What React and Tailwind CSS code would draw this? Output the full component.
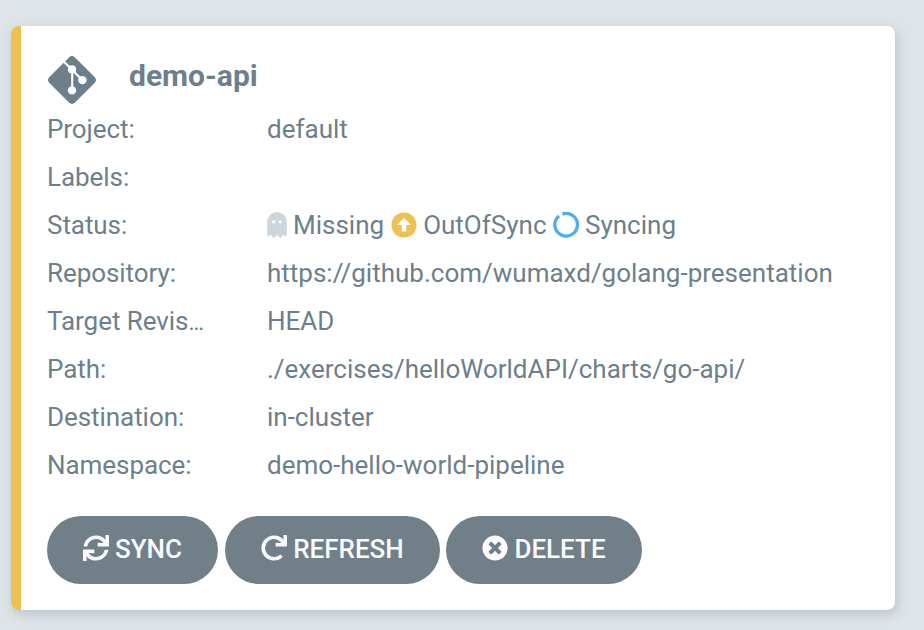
import {
  FaGhost,
  FaArrowAltCircleUp,
  FaSync,
  FaRedo,
  FaTimesCircle,
} from 'react-icons/fa';

function GitIcon() {
  return (
    <svg viewBox="0 0 48 48" className="size-[48px] shrink-0" fill="none">
      <path
        d="M27 1.4 L46.6 21 Q49.4 24 46.6 27 L27 46.6 Q24 49.4 21 46.6 L1.4 27 Q-1.4 24 1.4 21 L21 1.4 Q24 -1.4 27 1.4Z"
        fill="#6d7f8b"
      />
      <path d="M15.5 5.2 L34.3 24 M24.2 13.5 V34.3" stroke="#fff" strokeWidth="2.1" />
      <circle cx="24" cy="13.4" r="4.1" fill="#fff" />
      <circle cx="34.4" cy="24.1" r="4.2" fill="#fff" />
      <circle cx="24" cy="34.4" r="4.2" fill="#fff" />
    </svg>
  );
}

function SyncingIcon() {
  return (
    <svg viewBox="0 0 26 26" className="ml-[6px] size-[26px]" fill="none">
      <path d="M9.4 2.1 A11.3 11.3 0 1 1 6 4" stroke="#4dade8" strokeWidth="3.3" />
    </svg>
  );
}

function Row({ label, children }) {
  return (
    <div className="flex h-12 items-center whitespace-nowrap">
      <div className="w-[220px] shrink-0 tracking-[-0.06px]">{label}</div>
      <div className="flex items-center">{children}</div>
    </div>
  );
}

function Action({ icon: Icon, label, className }) {
  return (
    <button
      className={`flex h-[68px] items-center justify-center rounded-full bg-[#717f89] pb-[2px] font-medium text-[#f8fafb] ${className}`}
    >
      <Icon className="mr-[6px] mb-[2px] size-[26px]" />
      <span>{label}</span>
    </button>
  );
}

export default function App() {
  return (
    <div className="h-[630px] w-[924px] overflow-hidden bg-[#dee5e8] pt-[26px] pl-[11px] font-['Roboto',sans-serif] text-[26px] leading-[48px] text-[#6d7f8b]">
      <div className="h-[584px] w-[884px] rounded-lg border-l-[10px] border-[#edc150] bg-white pl-[26px] shadow-[2px_4px_12px_rgba(109,127,139,0.35)]">
        <div className="flex h-[79px] items-start pt-[30px]">
          <div className="ml-px">
            <GitIcon />
          </div>
          <div className="ml-[33px] text-[30px] leading-[40px] font-bold">demo-api</div>
        </div>
        <Row label="Project:">default</Row>
        <Row label="Labels:" />
        <Row label="Status:">
          <FaGhost className="h-[26px] w-[20px] text-[#ccd6dd]" />
          <span className="ml-[6px]">Missing</span>
          <FaArrowAltCircleUp className="ml-[6.5px] size-[26px] text-[#edc150]" />
          <span className="ml-[6.5px]">OutOfSync</span>
          <SyncingIcon />
          <span className="ml-[6.5px]">Syncing</span>
        </Row>
        <Row label="Repository:">https://github.com/wumaxd/golang-presentation</Row>
        <Row
          label={
            <>
              Target Revis<span className="text-[23px] leading-none">…</span>
            </>
          }
        >
          HEAD
        </Row>
        <Row label="Path:">./exercises/helloWorldAPI/charts/go-api/</Row>
        <Row label="Destination:">in-cluster</Row>
        <Row label="Namespace:">demo-hello-world-pipeline</Row>
        <div className="mt-[27px] flex">
          <Action icon={FaSync} label="SYNC" className="w-[171px]" />
          <Action icon={FaRedo} label="REFRESH" className="ml-[7px] w-[215px]" />
          <Action icon={FaTimesCircle} label="DELETE" className="ml-[6px] w-[196px]" />
        </div>
      </div>
    </div>
  );
}
